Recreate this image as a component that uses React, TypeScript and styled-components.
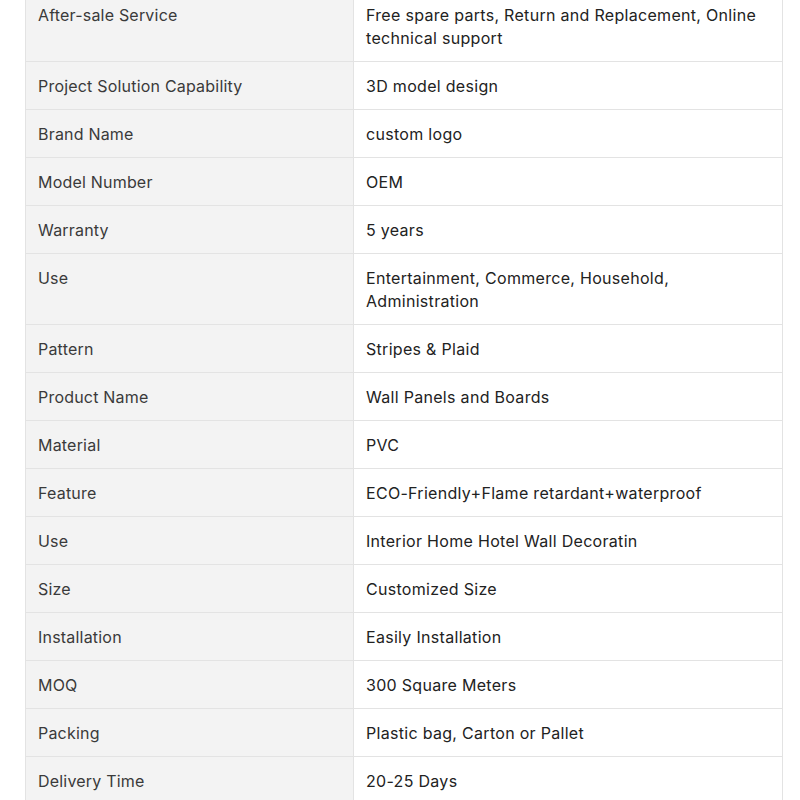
import React from "react";
import styled, { createGlobalStyle } from "styled-components";

const Global = createGlobalStyle`
  html, body { margin: 0; padding: 0; background: #ffffff; }
  body { font-family: Inter, "Noto Sans", sans-serif; }
`;

const Wrapper = styled.div`
  margin: -10px 0 0 25px;
  width: 758px;
`;

const Table = styled.table`
  width: 100%;
  border-collapse: collapse;
  table-layout: fixed;
  font-family: Inter, "Noto Sans", sans-serif;
  font-size: 16px;
  line-height: 23px;
`;

const Row = styled.tr``;

const Cell = styled.td<{ $label?: boolean }>`
  border: 1px solid #e3e3e3;
  padding: 13px 12px 11px;
  vertical-align: top;
  text-align: left;
  background: ${(p) => (p.$label ? "#f3f3f3" : "#ffffff")};
  color: ${(p) => (p.$label ? "#3a3a3a" : "#222222")};
  letter-spacing: ${(p) => (p.$label ? "0.2px" : "0.3px")};
  width: ${(p) => (p.$label ? "303px" : "auto")};
`;

const rows: [string, string][] = [
  ["After-sale Service", "Free spare parts, Return and Replacement, Online technical support"],
  ["Project Solution Capability", "3D model design"],
  ["Brand Name", "custom logo"],
  ["Model Number", "OEM"],
  ["Warranty", "5 years"],
  ["Use", "Entertainment, Commerce, Household, Administration"],
  ["Pattern", "Stripes & Plaid"],
  ["Product Name", "Wall Panels and Boards"],
  ["Material", "PVC"],
  ["Feature", "ECO-Friendly+Flame retardant+waterproof"],
  ["Use", "Interior Home Hotel Wall Decoratin"],
  ["Size", "Customized Size"],
  ["Installation", "Easily Installation"],
  ["MOQ", "300 Square Meters"],
  ["Packing", "Plastic bag, Carton or Pallet"],
  ["Delivery Time", "20-25 Days"],
];

export default function App() {
  return (
    <>
      <Global />
      <Wrapper>
        <Table>
          <tbody>
            {rows.map(([k, v], i) => (
              <Row key={i}>
                <Cell $label>{k}</Cell>
                <Cell>{v}</Cell>
              </Row>
            ))}
          </tbody>
        </Table>
      </Wrapper>
    </>
  );
}
